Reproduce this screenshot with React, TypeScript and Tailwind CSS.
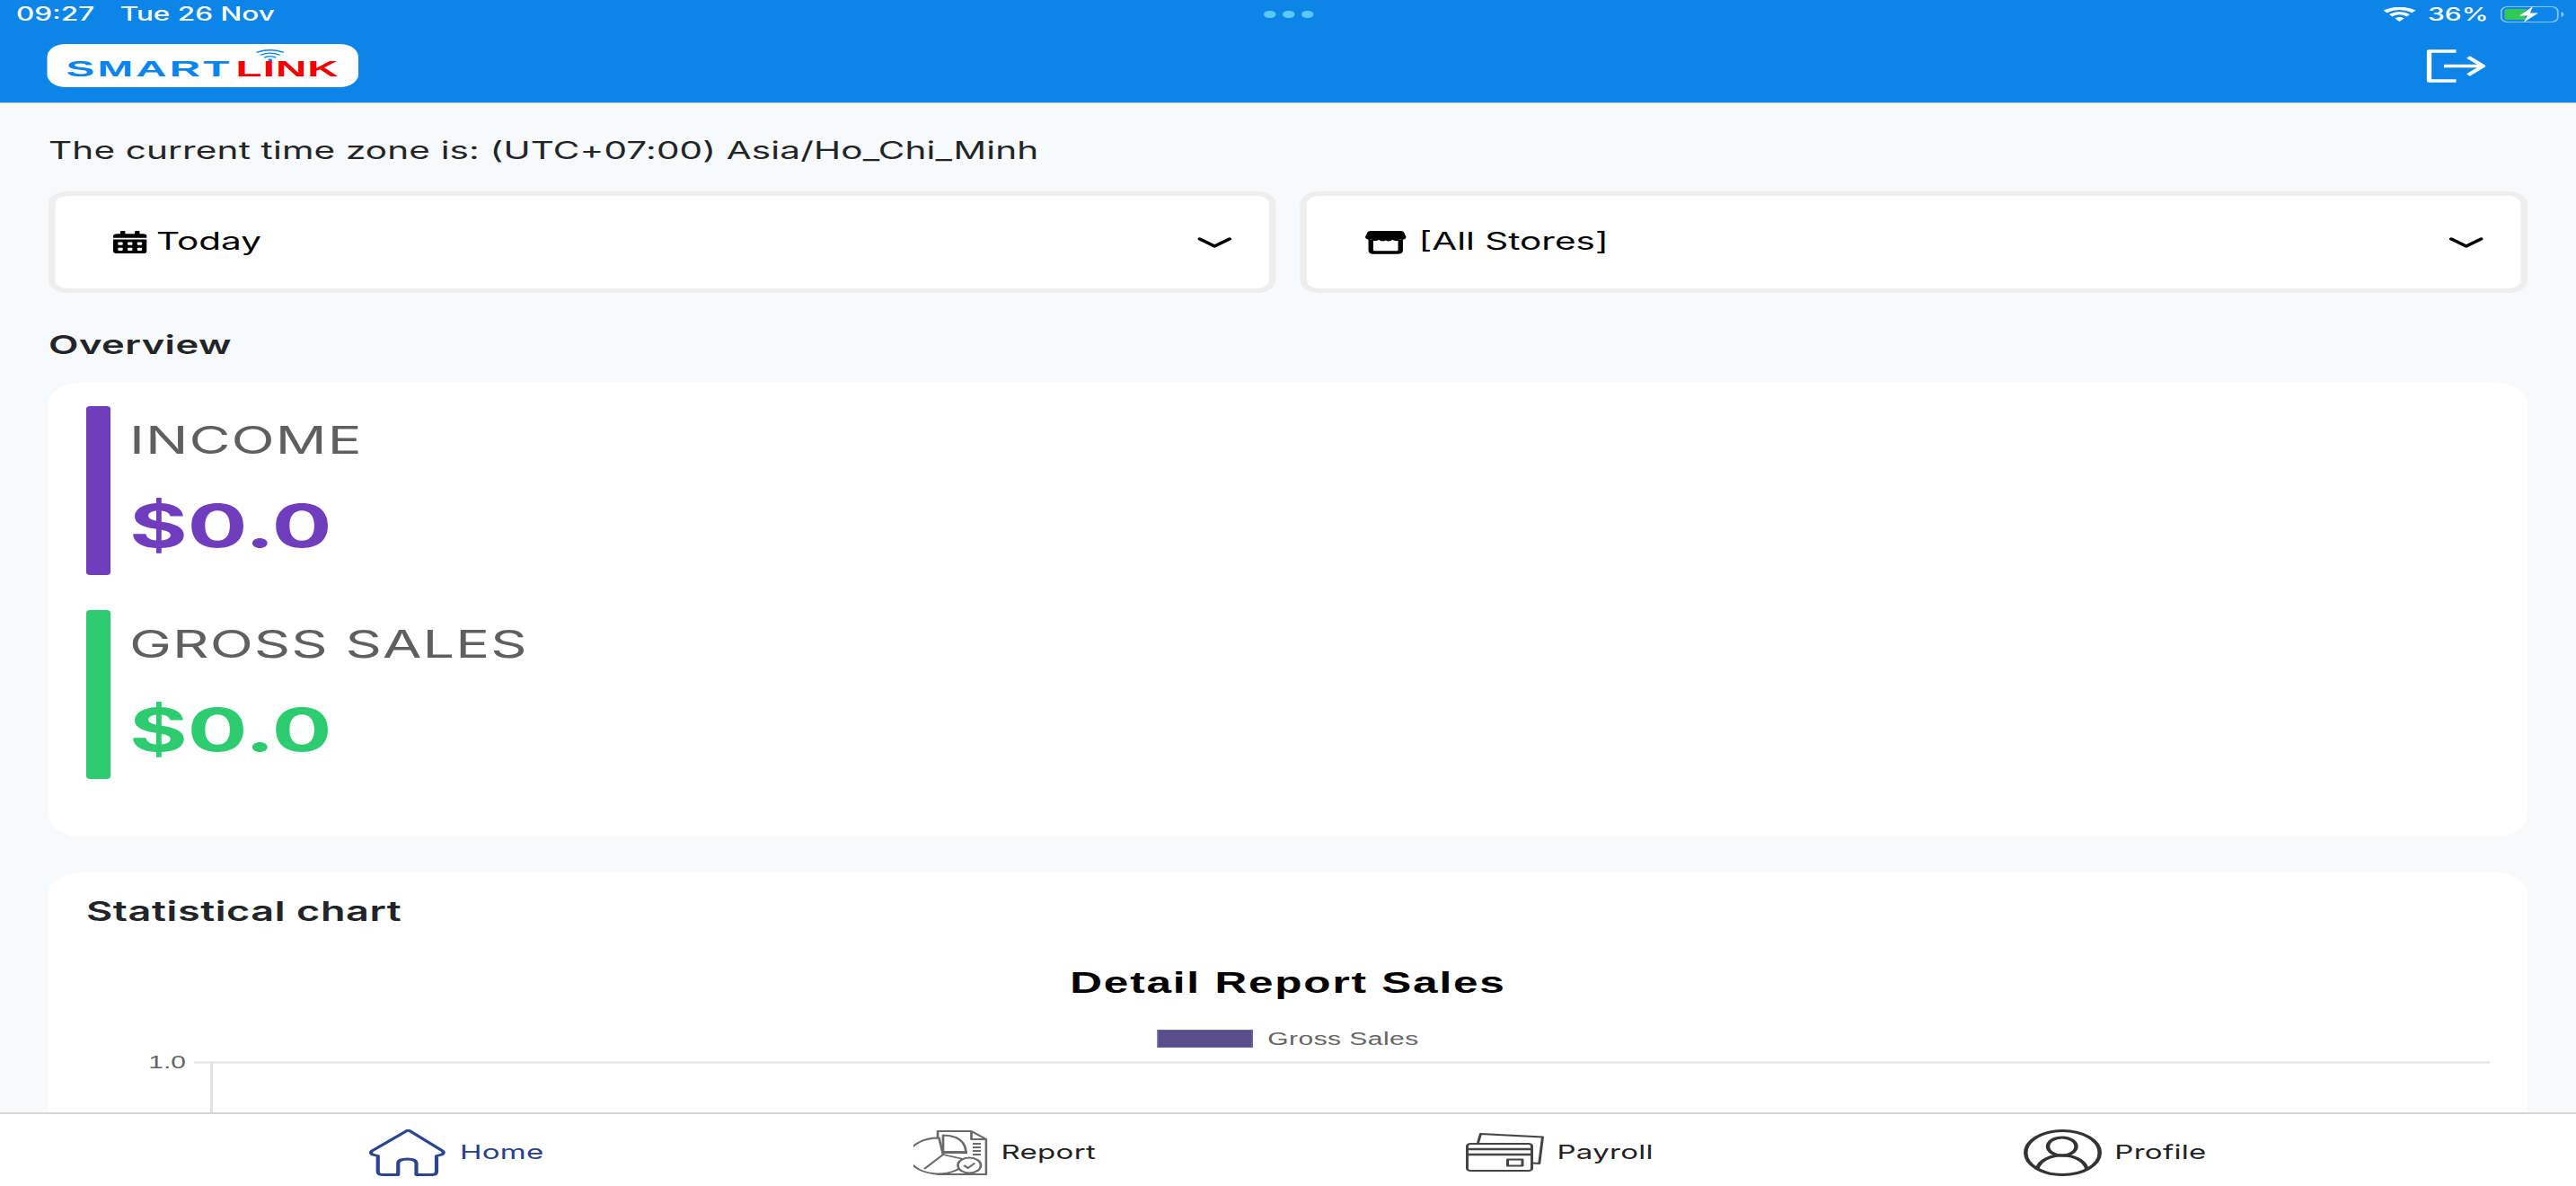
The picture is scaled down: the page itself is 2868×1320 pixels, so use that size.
import { FaCalendarAlt } from 'react-icons/fa';

// the screenshot is stretched sideways, so the page is laid out at 1912px and scaled 1.5x
function Chevron() {
  return (
    <svg viewBox="0 0 25 12" className="w-[25px] h-[12px]" fill="none" stroke="#000" strokeWidth="3.2" strokeLinecap="round" strokeLinejoin="round">
      <path d="M1.5 2 L12.5 10 L23.5 2" />
    </svg>
  );
}

function StoreIcon() {
  return (
    <svg viewBox="0 0 31 26" className="w-[31px] h-[26px]">
      <path d="M4 0 H27 Q28.5 0 29 1.5 L30.5 6 Q31 8 29.5 9 Q28 10.5 26 9.5 Q24 12.5 20.5 10 Q18 12.5 15.5 10.5 Q13 12.5 10.5 10 Q7 12.5 5 9.5 Q3 10.5 1.5 9 Q0 8 0.5 6 L2 1.5 Q2.5 0 4 0 Z" fill="#000" />
      <path d="M4.5 10 V21.5 Q4.5 24 7 24 H24 Q26.5 24 26.5 21.5 V10" fill="none" stroke="#000" strokeWidth="3.6" />
    </svg>
  );
}

function HomeIcon() {
  return (
    <svg viewBox="0 0 57 52" className="w-[57px] h-[52px]" fill="none" stroke="#2b4590" strokeWidth="2.8" strokeLinejoin="round">
      <path d="M28 1.5 L2 24 Q0.5 26 2.5 28 L6.5 29.5 V47 Q6.5 50.5 10 50.5 H21.5 V38 Q21.5 33 28.5 33 Q35 33 35 38 V50.5 H47 Q50 50.5 50 47 V29.5 L54 28 Q56 26 54.5 24 L30 1.5 Q29 0.8 28 1.5 Z" />
    </svg>
  );
}

function ReportIcon() {
  return (
    <svg viewBox="0 0 55 50" className="w-[55px] h-[50px]" fill="none" stroke="#6a6a6a" strokeWidth="1.8" strokeLinejoin="round">
      <path d="M18 8 V1 H43 L54 10 V49 H18 V47" />
      <path d="M43 1 V10 H54" />
      <path d="M22 8 V5.5 Q38 6 39 24 H22 V8 Z" />
      <path d="M19 8.5 A22 20 0 1 0 40 33 L22 27 Z" fill="#fff" />
      <path d="M22 27 L8 43" />
      <path d="M22 24.5 H40" strokeWidth="3" />
      <path d="M44 15 H50 M44 19 H50 M44 23 H50 M44 27 H50" strokeWidth="2" />
      <circle cx="41.5" cy="39" r="8.5" fill="#fff" />
      <path d="M37.5 39 L40.5 42 L45.5 36.5" />
    </svg>
  );
}

function PayrollIcon() {
  return (
    <svg viewBox="0 0 58 43" className="w-[58px] h-[43px]" fill="none" stroke="#444" strokeWidth="2" strokeLinejoin="round">
      <path d="M9 11 L11 1 L57 4.5 L54.5 34 L50 33.5" />
      <rect x="1" y="12" width="48" height="30" rx="2.5" />
      <path d="M1 18 H49 M1 24 H49" strokeWidth="2.4" />
      <rect x="31" y="29.5" width="11" height="7" />
    </svg>
  );
}

function ProfileIcon() {
  return (
    <svg viewBox="0 0 58 52" className="w-[58px] h-[52px]" fill="none" stroke="#333" strokeWidth="3">
      <ellipse cx="29" cy="26" rx="27.5" ry="24.5" />
      <ellipse cx="28.5" cy="19" rx="10.5" ry="10" />
      <path d="M10 44 C12 34 20 29 28.5 29 C37 29 45 34 47 44" />
    </svg>
  );
}

function NavItem({ label, icon, active }: { label: string; icon: React.ReactNode; active?: boolean }) {
  return (
    <div className="flex items-center gap-[10px]">
      {icon}
      <span className={`text-[22px] tracking-[0.2px] ${active ? 'text-[#27408b]' : 'text-[#222]'}`}>{label}</span>
    </div>
  );
}

function Metric({ title, bar, text }: { title: string; bar: string; text: string }) {
  return (
    <div className="flex gap-[14px] h-[188px]">
      <div className={`w-[18px] rounded-[3px] ${bar}`} />
      <div className="flex flex-col">
        <div className="mt-[15px] text-[42px] leading-[46px] tracking-[0.7px] text-[#5f5f5f]">{title}</div>
        <div className={`mt-[34px] text-[66px] leading-[76px] font-bold ${text}`}>$0.0</div>
      </div>
    </div>
  );
}

export default function App() {
  return (
    <div className="w-[2868px] h-[1320px] overflow-hidden">
      <div className="w-[1912px] h-[1320px] origin-top-left scale-x-[1.5] flex flex-col bg-[#f8f9fa] text-[#212529] font-[Inter,sans-serif]">
        {/* status bar + header */}
        <header className="h-[115px] shrink-0 bg-[#0c85e8] border-b border-[#c6cbd0] text-white">
          <div className="h-[32px] flex items-center justify-between pl-[12px] pr-[8px] relative">
            <div className="flex gap-[19px] text-[21px] font-medium">
              <span>09:27</span>
              <span>Tue 26 Nov</span>
            </div>
            <div className="absolute left-[938px] top-[12px] flex gap-[5px]">
              <div className="w-[9px] h-[8px] rounded-full bg-[#5ac8fa]" />
              <div className="w-[9px] h-[8px] rounded-full bg-[#5ac8fa]" />
              <div className="w-[9px] h-[8px] rounded-full bg-[#5ac8fa]" />
            </div>
            <div className="flex items-center gap-[9px]">
              <svg viewBox="0 0 24 16" className="w-[24px] h-[16px]" fill="#fff">
                <path d="M12 16 L8.6 12.4 Q12 9.8 15.4 12.4 Z M6.6 10.4 L4.3 8 Q12 1.8 19.7 8 L17.4 10.4 Q12 6 6.6 10.4 Z M2.6 6.2 L0 3.6 Q12 -4.2 24 3.6 L21.4 6.2 Q12 -0.4 2.6 6.2 Z" />
              </svg>
              <span className="text-[20px] font-medium">36%</span>
              <svg viewBox="0 0 48 18" className="w-[48px] h-[18px]">
                <rect x="0.5" y="0.5" width="42" height="17" rx="5" fill="none" stroke="#8cc4f4" strokeWidth="1.2" />
                <path d="M5 3 H19 Q17 9 19 15 H5 Q3 15 3 13 V5 Q3 3 5 3 Z" fill="#34c759" />
                <path d="M24 0 L14 10.5 H20 L17 18 L28 7.5 H22 Z" fill="#fff" />
                <path d="M45 6 Q47 7 47 9 Q47 11 45 12 Z" fill="#8cc4f4" />
              </svg>
            </div>
          </div>
          <div className="flex items-center justify-between pl-[35px] pr-[67px] h-[48px] mt-[17px]">
            <div className="relative w-[231px] h-[48px] rounded-[14px] bg-white flex items-center justify-center pt-[8px] font-['Liberation_Sans',sans-serif] font-bold text-[23px] leading-none overflow-hidden">
              <div className="scale-x-[1.38]">
                <span className="text-[#0a84ee] tracking-[1.5px]">SMART</span>
                <span className="text-[#f50000] tracking-[0.5px] ml-[2px]">LINK</span>
              </div>
              <svg viewBox="0 0 22 15" className="absolute left-[155px] top-[5px] w-[21px] h-[15px]" fill="none" stroke="#0a84ee" strokeWidth="1.4" strokeLinecap="round">
                <path d="M1 4 Q11 -1 21 4 M4 7 Q11 3 18 7 M7 10 Q11 7.5 15 10" />
                <circle cx="11" cy="13" r="1" fill="#0a84ee" />
              </svg>
            </div>
            <svg viewBox="0 0 44 37" className="w-[44px] h-[37px]" fill="none" stroke="#fff" strokeWidth="3.6" strokeLinejoin="round">
              <path d="M22 2 H2 V35 H22" />
              <path d="M13 18.5 H41" />
              <path d="M31 8.5 L42 18.5 L31 28.5" />
            </svg>
          </div>
        </header>

        {/* content */}
        <main className="flex-1 min-h-0 overflow-hidden pl-[36px] pr-[36px]">
          <div className="mt-[37px] text-[27px] leading-[32px] tracking-[0.1px]">
            The current time zone is: (UTC+07:00) Asia/Ho_Chi_Minh
          </div>

          <div className="mt-[29px] flex gap-[18px]">
            <div className="flex-1 h-[113px] rounded-[14px] border-[5px] border-[#eeeeee] bg-white flex items-center justify-between pl-[43px] pr-[28px]">
              <div className="flex items-center gap-[7px] text-black text-[27px]">
                <FaCalendarAlt className="w-[25px] h-[25px]" preserveAspectRatio="none" />
                <span>Today</span>
              </div>
              <Chevron />
            </div>
            <div className="flex-1 h-[113px] rounded-[14px] border-[5px] border-[#eeeeee] bg-white flex items-center justify-between pl-[43px] pr-[28px]">
              <div className="flex items-center gap-[9px] text-black text-[27px]">
                <StoreIcon />
                <span>[All Stores]</span>
              </div>
              <Chevron />
            </div>
          </div>

          <div className="mt-[41px] text-[29px] leading-[34px] tracking-[0.3px] font-semibold">Overview</div>

          <section className="mt-[25px] h-[505px] rounded-[24px] bg-white pt-[26px] pl-[28px] flex flex-col gap-[39px]">
            <Metric title="INCOME" bar="bg-[#6f3dbd]" text="text-[#6f3dbd]" />
            <Metric title="GROSS SALES" bar="bg-[#2ecc71]" text="text-[#2ecc71]" />
          </section>

          <section className="mt-[40px] rounded-t-[24px] bg-white">
            <div className="pt-[25px] pl-[28px] text-[30px] leading-[36px] tracking-[0.4px] font-semibold">Statistical chart</div>
            <div className="mt-[42px] font-['Liberation_Sans',sans-serif]">
              <div className="text-center text-[33px] leading-[40px] tracking-[1.2px] font-bold text-black">Detail Report Sales</div>
              <div className="mt-[29px] flex items-center justify-center gap-[11px] text-[20px] leading-[26px] tracking-[0.3px] text-[#666]">
                <div className="w-[71px] h-[20px] bg-[#5a4f8b] border border-[#6d64a0]" />
                <span>Gross Sales</span>
              </div>
              {/* plot area, the lower part sits behind the tab bar */}
              <svg viewBox="0 0 1840 80" className="mt-[12px] w-full h-[80px] overflow-visible font-['Liberation_Sans',sans-serif]">
                <path d="M108 1.5 H1812 M121 1.5 V80 M108 67.5 H1812" stroke="#e2e2e2" strokeWidth="2" fill="none" />
                <text x="102" y="8" textAnchor="end" fontSize="20" fill="#666">1.0</text>
                <text x="102" y="72" textAnchor="end" fontSize="20" fill="#666">0.8</text>
              </svg>
            </div>
          </section>
        </main>

        {/* tab bar */}
        <nav className="h-[82px] shrink-0 bg-white border-t-2 border-[#d6d6d6] pt-[5px] flex items-center justify-evenly">
          <NavItem label="Home" icon={<HomeIcon />} active />
          <NavItem label="Report" icon={<ReportIcon />} />
          <NavItem label="Payroll" icon={<PayrollIcon />} />
          <NavItem label="Profile" icon={<ProfileIcon />} />
        </nav>
      </div>
    </div>
  );
}
